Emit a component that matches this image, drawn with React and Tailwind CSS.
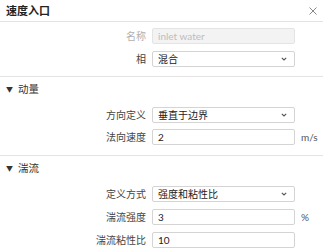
import React from "react";

const font = "font-['Lato','Noto_Sans_CJK_SC',sans-serif]";

const Chevron = () => (
  <svg width="6" height="4" viewBox="0 0 6 4" className="shrink-0">
    <path d="M0.8 0.8 L3 3 L5.2 0.8" fill="none" stroke="#555" strokeWidth="1.1" />
  </svg>
);

const Row = ({ label, children, unit, dim }) => (
  <div className="flex items-center h-[16px]">
    <div
      className={`w-[152px] pr-[6px] text-right text-[10px] leading-none ${
        dim ? "text-[#b0b0b0]" : "text-[#444]"
      }`}
    >
      {label}
    </div>
    <div className="w-[143px] h-full">{children}</div>
    {unit && <div className="pl-[6px] text-[10px] text-[#555] leading-none">{unit}</div>}
  </div>
);

const TextBox = ({ value, disabled }) => (
  <div
    className={`h-full flex items-center px-[5px] border rounded-[2px] text-[10px] leading-none ${
      disabled
        ? "bg-[#f3f3f3] border-[#e4e4e4] text-[#bdbdbd]"
        : "bg-white border-[#d4d4d4] text-[#222]"
    }`}
  >
    {value}
  </div>
);

const Select = ({ value }) => (
  <div className="h-full flex items-center justify-between pl-[5px] pr-[7px] bg-white border border-[#d4d4d4] rounded-[2px] text-[10px] leading-none text-[#222]">
    <span>{value}</span>
    <Chevron />
  </div>
);

const SectionHead = ({ title }) => (
  <div className="flex items-center h-[24px] pl-[6px] gap-[5px]">
    <span className="text-[7px] text-[#333] leading-none">▼</span>
    <span className="text-[10.5px] text-[#333] leading-none">{title}</span>
  </div>
);

const App = () => {
  return (
    <div className={`w-[323px] h-[250px] bg-white overflow-hidden ${font}`}>
      <div className="flex items-center justify-between h-[22px] pl-[6px] pr-[6px] border-b border-[#e3e3e3]">
        <span className="text-[11px] font-semibold text-[#222] leading-none">速度入口</span>
        <svg width="8" height="8" viewBox="0 0 8 8">
          <path d="M0.5 0.5 L7.5 7.5 M7.5 0.5 L0.5 7.5" stroke="#888" strokeWidth="1" />
        </svg>
      </div>

      <div className="flex flex-col gap-[7px] pt-[6px] pb-[9px] border-b border-[#e3e3e3]">
        <Row label="名称" dim>
          <TextBox value="inlet water" disabled />
        </Row>
        <Row label="相">
          <Select value="混合" />
        </Row>
      </div>

      <div className="pb-[10px] border-b border-[#e3e3e3]">
        <SectionHead title="动量" />
        <div className="flex flex-col gap-[6px] pt-[6px]">
          <Row label="方向定义">
            <Select value="垂直于边界" />
          </Row>
          <Row label="法向速度" unit="m/s">
            <TextBox value="2" />
          </Row>
        </div>
      </div>

      <div>
        <SectionHead title="湍流" />
        <div className="flex flex-col gap-[7px] pt-[6px]">
          <Row label="定义方式">
            <Select value="强度和粘性比" />
          </Row>
          <Row label="湍流强度" unit="%">
            <TextBox value="3" />
          </Row>
          <Row label="湍流粘性比">
            <TextBox value="10" />
          </Row>
        </div>
      </div>
    </div>
  );
};

export default App;
